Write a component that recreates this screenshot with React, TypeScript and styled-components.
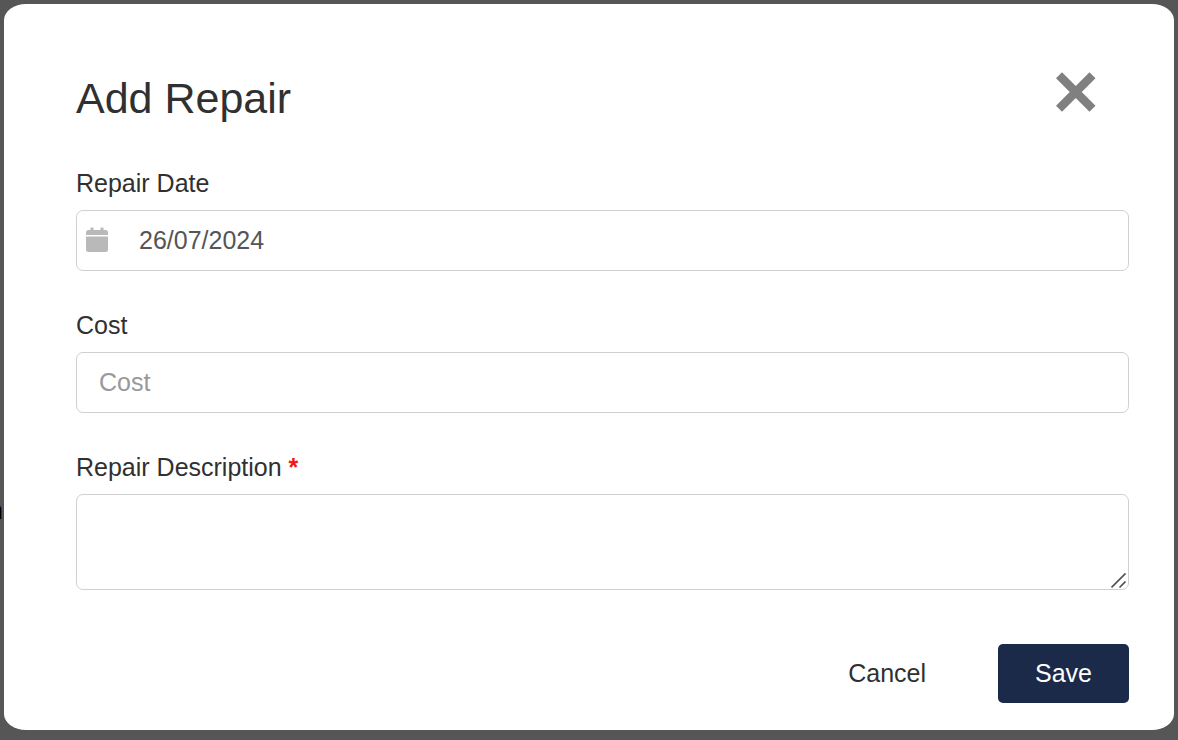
import React, { useState } from "react";
import styled, { createGlobalStyle } from "styled-components";

const GlobalStyle = createGlobalStyle`
  * { box-sizing: border-box; }
  body {
    margin: 0;
    background: #565656;
    font-family: "Liberation Sans", Arial, Helvetica, sans-serif;
    color: #303030;
  }
`;

const Backdrop = styled.div`
  position: relative;
  min-height: 100vh;
  padding: 4px 4px 10px;
  overflow: hidden;
`;

const PageBehind = styled.div`
  position: absolute;
  top: 495px;
  right: 100%;
  margin-right: -3px;
  font-size: 26px;
  line-height: 30px;
  color: #000;
`;

const Dialog = styled.form`
  position: relative;
  padding: 68px 45px 27px 72px;
  border-radius: 22px / 16px;
  background: #fff;
`;

const Header = styled.header`
  display: flex;
  justify-content: space-between;
  align-items: flex-start;
  padding-right: 33px;
  margin-bottom: 44px;
`;

const Title = styled.h1`
  margin: 0;
  font-size: 43px;
  line-height: 52px;
  font-weight: 400;
`;

const CloseButton = styled.button`
  display: flex;
  padding: 0;
  border: 0;
  background: none;
  color: #808080;
  cursor: pointer;
`;

const Field = styled.div`
  display: flex;
  flex-direction: column;
  gap: 12px;
  margin-bottom: 39px;
`;

const Label = styled.label`
  font-size: 25px;
  line-height: 30px;
`;

const Required = styled.span`
  color: #f01818;
  font-weight: 700;
`;

const Control = styled.div`
  display: flex;
  align-items: center;
  height: 61px;
  border: 1px solid #d0d0d0;
  border-radius: 7px;
  padding-left: 9px;
`;

const TextInput = styled.input<{ $inset: number }>`
  flex: 1;
  min-width: 0;
  height: 100%;
  padding: 0 12px 0 ${(p) => p.$inset}px;
  border: 0;
  outline: 0;
  background: none;
  font: inherit;
  font-size: 25px;
  color: #555;
  &::placeholder { color: #999; opacity: 1; }
`;

const AreaWrap = styled.div`
  position: relative;
  display: flex;
`;

const TextArea = styled.textarea`
  width: 100%;
  height: 96px;
  padding: 12px 21px;
  border: 1px solid #d0d0d0;
  border-radius: 7px;
  outline: 0;
  background: none;
  font: inherit;
  font-size: 25px;
  color: #555;
  resize: vertical;
  &::-webkit-resizer { display: none; }
`;

const Grip = styled.svg`
  position: absolute;
  right: 2px;
  bottom: 1px;
  pointer-events: none;
`;

const Actions = styled.footer`
  display: flex;
  justify-content: flex-end;
  gap: 35px;
  margin-top: 54px;
`;

const Button = styled.button<{ $primary?: boolean }>`
  height: 59px;
  padding: 0 37px;
  border: 0;
  border-radius: 5px;
  background: ${(p) => (p.$primary ? "#1c2a4a" : "transparent")};
  color: ${(p) => (p.$primary ? "#fff" : "#303030")};
  font: inherit;
  font-size: 25px;
  cursor: pointer;
`;

const LastField = styled(Field)`
  margin-bottom: 0;
`;

export default function App() {
  const [date, setDate] = useState("26/07/2024");
  return (
    <>
      <GlobalStyle />
      <Backdrop>
        <PageBehind aria-hidden="true">n</PageBehind>
        <Dialog role="dialog" aria-labelledby="title" onSubmit={(e) => e.preventDefault()}>
          <Header>
            <Title id="title">Add Repair</Title>
            <CloseButton type="button" aria-label="Close">
              <svg width="40" height="40" viewBox="0 0 40 40" fill="none" stroke="currentColor" strokeWidth="8.500">
                <path d="M3 3.200 36.500 36.700M36.500 3.200 3 36.700" />
              </svg>
            </CloseButton>
          </Header>
          <Field>
            <Label htmlFor="date">Repair Date</Label>
            <Control>
              <svg width="22" height="28" viewBox="0 0 22 28" fill="#b9b9b9" aria-hidden="true">
                <path d="M4.500 3V1.200Q4.500.4 5.300.4H6.700Q7.500.4 7.500 1.200V3H14.500V1.200Q14.500.4 15.300.4H16.700Q17.500.4 17.500 1.200V3H19.500Q22 3 22 5.500V8H0V5.500Q0 3 2.500 3Z" />
                <path d="M0 9.500H22V22.500Q22 25 19.500 25H2.500Q0 25 0 22.500Z" />
              </svg>
              <TextInput id="date" $inset={31} value={date} onChange={(e) => setDate(e.target.value)} />
            </Control>
          </Field>
          <Field>
            <Label htmlFor="cost">Cost</Label>
            <Control>
              <TextInput id="cost" $inset={13} placeholder="Cost" />
            </Control>
          </Field>
          <LastField>
            <Label htmlFor="description">
              Repair Description <Required>*</Required>
            </Label>
            <AreaWrap>
              <TextArea id="description" required />
              <Grip width="16" height="16" viewBox="0 0 16 16" stroke="#505050" strokeWidth="1.700" aria-hidden="true">
                <path d="M.5 14.500 14.500.5M8.500 14.500 14.500 8.500" />
              </Grip>
            </AreaWrap>
          </LastField>
          <Actions>
            <Button type="button">Cancel</Button>
            <Button type="submit" $primary>Save</Button>
          </Actions>
        </Dialog>
      </Backdrop>
    </>
  );
}
